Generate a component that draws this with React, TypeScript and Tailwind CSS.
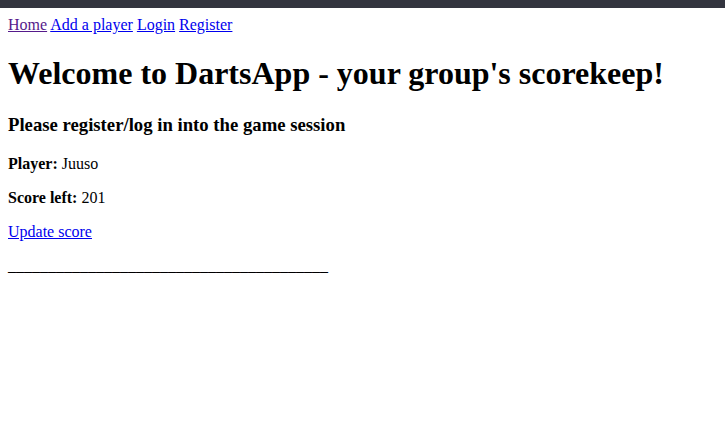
export default function App() {
  return (
    <div className="min-h-screen bg-white font-['Liberation_Serif',serif] text-[16px] leading-[normal] text-black">
      {/* top strip */}
      <div className="h-2 bg-[#33353f]" />

      <div className="p-2">
        <nav>
          <a href="#" className="text-[#551a8b] underline">Home</a>{' '}
          <a href="#" className="text-[#0000ee] underline">Add a player</a>{' '}
          <a href="#" className="text-[#0000ee] underline">Login</a>{' '}
          <a href="#" className="text-[#0000ee] underline">Register</a>
        </nav>

        <h1 className="my-[21.44px] text-[32px] font-bold">
          Welcome to DartsApp - your group's scorekeep!
        </h1>

        <h3 className="my-[18.72px] text-[18.72px] font-bold">
          Please register/log in into the game session
        </h3>

        <p className="my-4">
          <b>Player:</b> Juuso
        </p>
        <p className="my-4">
          <b>Score left:</b> 201
        </p>
        <p className="my-4">
          <a href="#" className="text-[#0000ee] underline">Update score</a>
        </p>
        <p className="my-4">________________________________________</p>
      </div>
    </div>
  );
}
